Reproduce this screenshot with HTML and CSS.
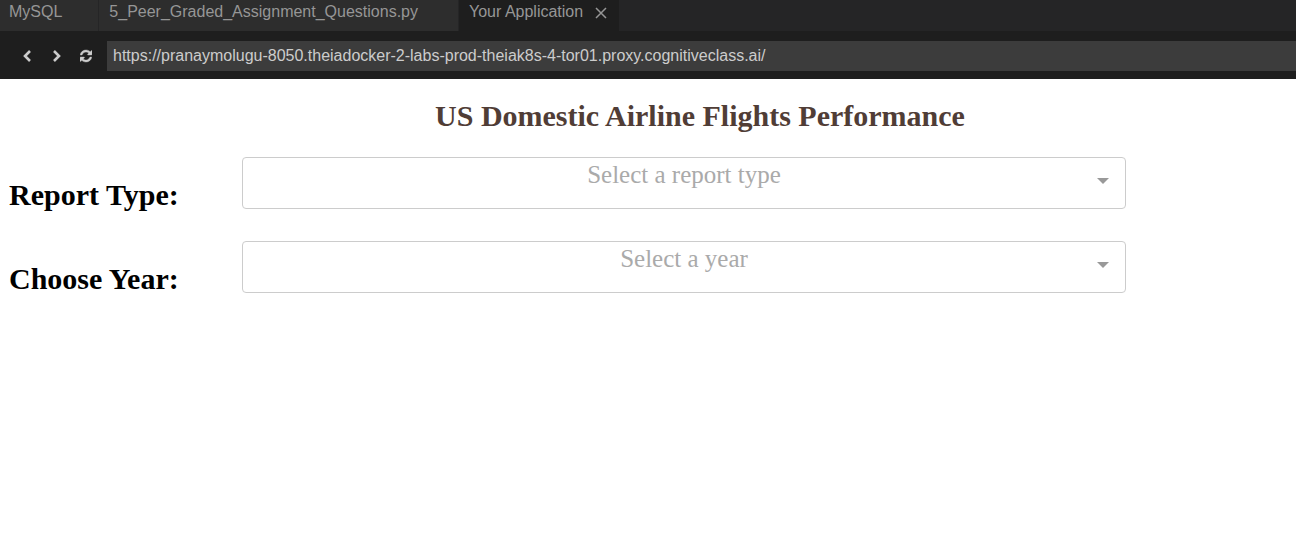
FILE: index.html
```html
<!DOCTYPE html>
<html lang="en">
<head>
<meta charset="utf-8">
<title>Your Application</title>
<link rel="stylesheet" href="styles.css">
</head>
<body>
<nav class="tabs" aria-label="Open editors">
  <button class="tab tab-first" type="button">MySQL</button>
  <button class="tab tab-file" type="button">5_Peer_Graded_Assignment_Questions.py</button>
  <div class="tab tab-active">
    <button class="tab-name" type="button">Your Application</button>
    <button class="tab-close" type="button" aria-label="Close">
      <svg width="12" height="12" viewBox="0 0 12 12"><path d="M1 1l10 10M11 1L1 11" fill="none" stroke="currentColor" stroke-width="1.5"/></svg>
    </button>
  </div>
</nav>
<div class="toolbar">
  <div class="nav-buttons">
    <button class="nav-button" type="button" aria-label="Back">
      <svg width="14" height="14" viewBox="0 0 14 14"><path d="M10 2L5 7l5 5" fill="none" stroke="currentColor" stroke-width="2.6"/></svg>
    </button>
    <button class="nav-button" type="button" aria-label="Forward">
      <svg width="14" height="14" viewBox="0 0 14 14"><path d="M4 2l5 5-5 5" fill="none" stroke="currentColor" stroke-width="2.6"/></svg>
    </button>
    <button class="nav-button" type="button" aria-label="Reload">
      <svg width="12" height="14" viewBox="0 0 1536 1536"><path fill="currentColor" stroke="currentColor" stroke-width="50" d="M1511 928q0 5-1 7-64 268-268 434.500T764 1536q-146 0-282.500-55T238 1324l-129 129q-19 19-45 19t-45-19-19-45V960q0-26 19-45t45-19h448q26 0 45 19t19 45-19 45l-137 137q71 66 161 102t187 36q134 0 250-65t186-179q11-17 53-117 8-23 30-23h192q13 0 22.500 9.500t9.500 22.500zm25-800v448q0 26-19 45t-45 19h-448q-26 0-45-19t-19-45 19-45l138-138Q969 256 768 256q-134 0-250 65T332 500q-11 17-53 117-8 23-30 23H50q-13 0-22.500-9.500T18 608v-7q65-268 270-434.500T768 0q146 0 284 55.500T1297 212l130-129q19-19 45-19t45 19 19 45z"/></svg>
    </button>
  </div>
  <input class="address" type="text" aria-label="Address" value="https://pranaymolugu-8050.theiadocker-2-labs-prod-theiak8s-4-tor01.proxy.cognitiveclass.ai/">
</div>
<main class="dashboard">
  <h1 class="title">US Domestic Airline Flights Performance</h1>
  <div class="field">
    <label class="field-label" for="report">Report Type:</label>
    <div class="picker">
      <select class="picker-select" id="report"><option>Select a report type</option></select>
      <svg class="picker-arrow" width="12" height="6" viewBox="0 0 12 6"><path d="M0 0h12L6 6z" fill="#999"/></svg>
    </div>
  </div>
  <div class="field">
    <label class="field-label" for="year">Choose Year:</label>
    <div class="picker">
      <select class="picker-select" id="year"><option>Select a year</option></select>
      <svg class="picker-arrow" width="12" height="6" viewBox="0 0 12 6"><path d="M0 0h12L6 6z" fill="#999"/></svg>
    </div>
  </div>
</main>
</body>
</html>
```

FILE: styles.css
```css
* {
  box-sizing: border-box;
}

body {
  margin: 0;
  background: #fff;
  font-family: "Liberation Serif", "Times New Roman", serif;
}

button {
  border: 0;
  padding: 0;
  background: none;
  color: inherit;
  font: inherit;
}

svg {
  display: block;
}

.tabs {
  display: flex;
  background: #252526;
  color: #969696;
  font: 16px/24px "Liberation Sans", Arial, sans-serif;
}

.tab {
  padding: 0 10px 7px 10px;
  background: #2d2d2d;
  border-right: 1px solid #252526;
  text-align: left;
  white-space: nowrap;
}

.tab-first {
  padding: 0 36px 7px 9px;
}

.tab-file {
  padding-right: 40px;
}

.tab-active {
  display: flex;
  align-items: center;
  gap: 12px;
  padding-right: 12px;
  background: #1e1e1e;
}

.tab-close {
  padding-top: 2px;
}

.toolbar {
  display: flex;
  align-items: center;
  padding: 10px 0 8px 20px;
  background: #1e1e1e;
}

.nav-buttons {
  display: flex;
  gap: 16px;
  padding-right: 15px;
  color: #ccc;
}

.address {
  flex: 1;
  min-width: 0;
  height: 30px;
  padding: 0 6px;
  border: 0;
  background: #3c3c3c;
  color: #ccc;
  font: 16px "Liberation Sans", Arial, sans-serif;
}

.dashboard {
  padding: 20px 8px;
}

.title {
  margin: 0 0 24px;
  padding-left: 104px;
  color: #503d36;
  font-size: 30px;
  line-height: 34px;
  text-align: center;
}

.field {
  display: flex;
  align-items: flex-end;
  margin-bottom: 32px;
}

.field-label {
  flex: 0 0 234px;
  padding-left: 1px;
  font-size: 30px;
  font-weight: bold;
  line-height: 28px;
}

.picker {
  position: relative;
  flex: 1;
  margin-right: 162px;
}

.picker-select {
  display: block;
  width: 100%;
  height: 52px;
  padding: 0 0 18px;
  appearance: none;
  border: 1px solid #ccc;
  border-radius: 4px;
  background: #fff;
  color: #aaa;
  font: 25px "Liberation Serif", "Times New Roman", serif;
  text-align: center;
  text-align-last: center;
}

.picker-arrow {
  position: absolute;
  top: 21px;
  right: 17px;
  pointer-events: none;
}
```
